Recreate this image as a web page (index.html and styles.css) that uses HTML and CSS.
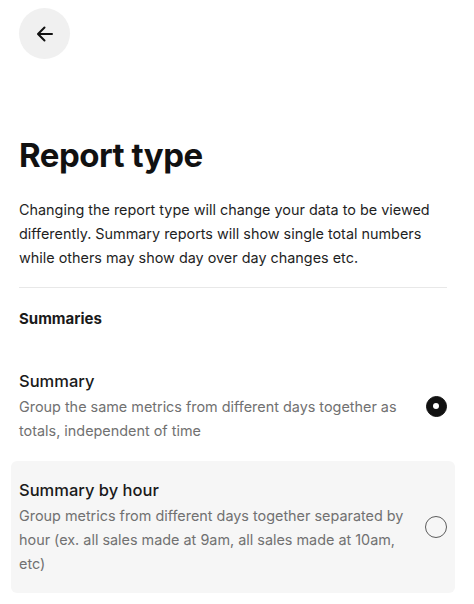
FILE: index.html
```html
<!DOCTYPE html>
<html lang="en">
<head>
<meta charset="utf-8">
<title>Report type</title>
<link rel="stylesheet" href="styles.css">
</head>
<body>
<div class="page">
  <button class="back" aria-label="Back">
    <svg width="20" height="20" viewBox="0 0 20 20" fill="none" stroke="#111" stroke-width="2" stroke-linecap="round" stroke-linejoin="round"><path d="M17 10H3.5M9.5 3.5L3 10l6.5 6.5"/></svg>
  </button>
  <h1 class="title">Report type</h1>
  <p class="intro">Changing the report type will change your data to be viewed differently. Summary reports will show single total numbers while others may show day over day changes etc.</p>
  <hr class="divider">
  <h2 class="section">Summaries</h2>
  <div class="options">
    <label class="option">
      <div class="text">
        <div class="name">Summary</div>
        <div class="desc">Group the same metrics from different days together as totals, independent of time</div>
      </div>
      <span class="radio checked"></span>
    </label>
    <label class="option hover">
      <div class="text">
        <div class="name">Summary by hour</div>
        <div class="desc">Group metrics from different days together separated by hour (ex. all sales made at 9am, all sales made at 10am, etc)</div>
      </div>
      <span class="radio"></span>
    </label>
  </div>
</div>
</body>
</html>
```
FILE: styles.css
```css
* { box-sizing: border-box; }
html, body { margin: 0; padding: 0; background: #fff; }
body {
  font-family: Inter, "Noto Sans", sans-serif;
  color: #1a1a1a;
  -webkit-font-smoothing: antialiased;
}
.page {
  padding: 8px 27px 0 19px;
  display: flex;
  flex-direction: column;
}
.back {
  width: 51px;
  height: 51px;
  border-radius: 50%;
  border: none;
  background: #f0f0f0;
  display: flex;
  align-items: center;
  justify-content: center;
  padding: 0;
  cursor: pointer;
}
.title {
  margin: 76px 0 0;
  font-size: 33px;
  line-height: 40px;
  font-weight: 700;
  letter-spacing: -0.5px;
  color: #111;
}
.intro {
  margin: 23px 0 0;
  font-size: 14.4px;
  line-height: 24px;
  color: #1f1f1f;
}
.divider {
  margin: 17px 0 0;
  border: none;
  height: 1px;
  background: #e8e8e8;
}
.section {
  margin: 21px 0 0;
  font-size: 15px;
  line-height: 20px;
  font-weight: 700;
  color: #1a1a1a;
}
.options {
  margin: 23px -8px 0;
  display: flex;
  flex-direction: column;
  gap: 1px;
}
.option {
  display: flex;
  align-items: center;
  gap: 16px;
  padding: 17px 8px;
  border-radius: 6px;
  cursor: pointer;
}
.option.hover { background: #f6f6f6; }
.text { flex: 1; }
.name {
  font-size: 16.5px;
  line-height: 24px;
  font-weight: 500;
  color: #1a1a1a;
}
.desc {
  margin-top: 2px;
  font-size: 14.4px;
  line-height: 24px;
  color: #717171;
}
.radio {
  flex: none;
  width: 22px;
  height: 22px;
  border-radius: 50%;
  border: 1.6px solid #5c5c5c;
  display: flex;
  align-items: center;
  justify-content: center;
}
.radio.checked {
  width: 21px;
  height: 21px;
  margin-right: 0.5px;
  background: #111;
  border-color: #111;
}
.radio.checked::after {
  content: "";
  width: 6px;
  height: 6px;
  border-radius: 50%;
  background: #fff;
}
```
